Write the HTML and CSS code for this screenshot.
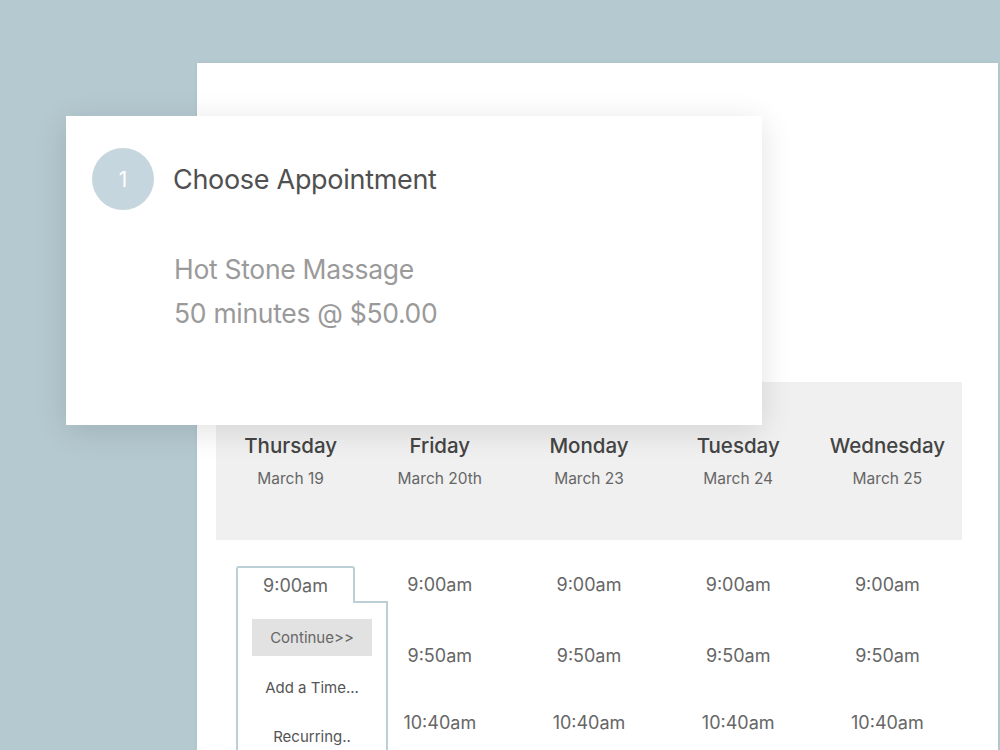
FILE: index.html
```html
<!DOCTYPE html>
<html lang="en">
<head>
    <meta charset="UTF-8">
    <meta name="viewport" content="width=device-width, initial-scale=1.0">
    <title>Choose Appointment</title>
    <link rel="stylesheet" href="styles.css">
</head>
<body>
    <div class="panel">
        <div class="card">
            <div class="step">
                <span class="step-num">1</span>
                <h1>Choose Appointment</h1>
            </div>
            <p class="service">Hot Stone Massage</p>
            <p class="service">50 minutes @ $50.00</p>
        </div>

        <div class="days">
            <div class="day"><h2>Thursday</h2><span>March 19</span></div>
            <div class="day"><h2>Friday</h2><span>March 20th</span></div>
            <div class="day"><h2>Monday</h2><span>March 23</span></div>
            <div class="day"><h2>Tuesday</h2><span>March 24</span></div>
            <div class="day"><h2>Wednesday</h2><span>March 25</span></div>
        </div>

        <div class="slots">
            <div class="col picked">
                <div class="tab">9:00am</div>
                <div class="menu">
                    <button class="continue">Continue&gt;&gt;</button>
                    <div class="menu-item">Add a Time...</div>
                    <div class="menu-item recurring">Recurring..</div>
                </div>
            </div>
            <div class="col">
                <div class="time">9:00am</div>
                <div class="time">9:50am</div>
                <div class="time">10:40am</div>
            </div>
            <div class="col">
                <div class="time">9:00am</div>
                <div class="time">9:50am</div>
                <div class="time">10:40am</div>
            </div>
            <div class="col">
                <div class="time">9:00am</div>
                <div class="time">9:50am</div>
                <div class="time">10:40am</div>
            </div>
            <div class="col">
                <div class="time">9:00am</div>
                <div class="time">9:50am</div>
                <div class="time">10:40am</div>
            </div>
        </div>
    </div>
</body>
</html>
```

FILE: styles.css
```css
body {
    margin: 0;
    padding: 63px 0 0 197px;
    height: 750px;
    box-sizing: border-box;
    overflow: hidden;
    background-color: #b5c9d1;
    font-family: Inter, "Open Sans", sans-serif;
}
.panel {
    position: relative;
    width: 801px;
    height: 687px;
    box-sizing: border-box;
    padding: 319px 36px 0 19px;
    background-color: #fff;
    box-shadow: 0 0 4px rgba(0, 0, 0, 0.05);
}
.card {
    position: absolute;
    left: -131px;
    top: 53px;
    width: 696px;
    height: 309px;
    box-sizing: border-box;
    padding: 32px 0 0 26px;
    background-color: #fff;
    box-shadow: 0 6px 30px rgba(0, 0, 0, 0.12);
    z-index: 2;
}
.step {
    display: flex;
    align-items: center;
    gap: 19px;
    margin-bottom: 43px;
}
.step-num {
    width: 62px;
    height: 62px;
    border-radius: 50%;
    background-color: #c6d6de;
    color: #fff;
    font-size: 21px;
    display: flex;
    align-items: center;
    justify-content: center;
}
.step h1 {
    margin: 0;
    font-size: 27px;
    font-weight: 400;
    color: #505050;
    letter-spacing: -0.3px;
}
.service {
    margin: 0 0 12px 82px;
    font-size: 26.5px;
    line-height: 32px;
    color: #9a9a9a;
    letter-spacing: -0.3px;
}
.days {
    display: grid;
    grid-template-columns: repeat(5, minmax(0, 1fr));
    height: 158px;
    box-sizing: border-box;
    padding-top: 51px;
    background-color: #f0f0f0;
    text-align: center;
}
.day h2 {
    margin: 0 0 9px;
    font-size: 20.5px;
    font-weight: 500;
    line-height: 26px;
    color: #444;
}
.day span {
    font-size: 15.5px;
    color: #666;
}
.slots {
    display: grid;
    grid-template-columns: repeat(5, minmax(0, 1fr));
    margin-top: 26px;
    text-align: center;
    font-size: 18px;
    color: #666;
}
.time {
    height: 24px;
    line-height: 24px;
    margin-top: 7px;
    margin-bottom: 47px;
}
.time:nth-child(2) {
    margin-bottom: 43px;
}
.picked {
    padding-left: 20px;
}
.tab {
    width: 119px;
    height: 35px;
    box-sizing: border-box;
    padding-top: 6px;
    line-height: 24px;
    border: 2px solid #bccfd6;
    border-bottom: none;
    border-radius: 3px 3px 0 0;
}
.menu {
    position: relative;
    width: 152px;
    height: 149px;
    box-sizing: border-box;
    padding: 18px 14px 0 14px;
    border-left: 2px solid #bccfd6;
    border-right: 2px solid #bccfd6;
    font-size: 15px;
    color: #555;
}
.menu::before {
    content: "";
    position: absolute;
    left: 115px;
    right: -2px;
    top: 0;
    border-top: 2px solid #bccfd6;
    border-top-right-radius: 3px;
}
.continue {
    display: block;
    width: 100%;
    height: 37px;
    border: none;
    background-color: #e2e2e2;
    color: #666;
    font-family: inherit;
    font-size: 15px;
    padding: 0;
}
.menu-item {
    margin-top: 20px;
    line-height: 24px;
}
.recurring {
    margin-top: 25px;
}
```
